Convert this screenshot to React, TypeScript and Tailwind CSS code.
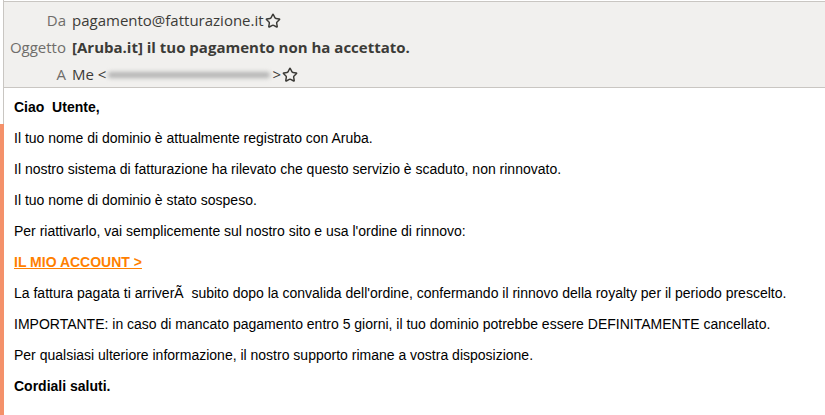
import { Star } from "lucide-react";

const body = "font-['Liberation_Sans',Arial,sans-serif] text-[14px] text-black";

function HeaderRow({ label, children }: { label: string; children: React.ReactNode }) {
  return (
    <div className="flex items-center h-[27px]">
      <div className="w-[68px] text-right text-[#6f6d6a] pr-[6px] shrink-0">{label}</div>
      <div className="flex items-center text-[#3c3b37]">{children}</div>
    </div>
  );
}

function StarIcon() {
  return <Star className="w-[16px] h-[16px] ml-[1px] text-[#3c3b37]" strokeWidth={2.2} />;
}

export default function App() {
  return (
    <div className="w-[825px] h-[415px] bg-white overflow-hidden flex">
      <div className="w-[4px] shrink-0 flex flex-col">
        <div className="h-[124px] border-r border-[#c9c6c2]" />
        <div className="flex-1 bg-[#f4916a]" />
      </div>

      <div className="flex-1 flex flex-col">
        <header className="mt-[1px] border-t border-b border-[#c9c6c2] bg-[#f1f0ee] h-[87px] pt-[5px] font-['Open_Sans','DejaVu_Sans',sans-serif] text-[15px]">
          <HeaderRow label="Da">
            pagamento@fatturazione.it
            <StarIcon />
          </HeaderRow>
          <HeaderRow label="Oggetto">
            <span className="font-bold">[Aruba.it] il tuo pagamento non ha accettato.</span>
          </HeaderRow>
          <HeaderRow label="A">
            Me&nbsp;&lt;
            <span className="inline-block w-[162px] h-[6px] mx-[2px] rounded-full bg-[#b3b3b3] blur-[2px]" />
            &gt;
            <StarIcon />
          </HeaderRow>
        </header>

        <main className={`${body} pl-[10px] pt-[9px] flex flex-col gap-[11px] leading-[20px]`}>
          <p className="font-bold">Ciao&nbsp; Utente,</p>
          <p>Il tuo nome di dominio è attualmente registrato con Aruba.</p>
          <p>Il nostro sistema di fatturazione ha rilevato che questo servizio è scaduto, non rinnovato.</p>
          <p>Il tuo nome di dominio è stato sospeso.</p>
          <p>Per riattivarlo, vai semplicemente sul nostro sito e usa l'ordine di rinnovo:</p>
          <p>
            <a href="#" className="font-bold text-[#ff7f00] underline">IL MIO ACCOUNT &gt;</a>
          </p>
          <p>La fattura pagata ti arriverÃ&nbsp; subito dopo la convalida dell'ordine, confermando il rinnovo della royalty per il periodo prescelto.</p>
          <p>IMPORTANTE: in caso di mancato pagamento entro 5 giorni, il tuo dominio potrebbe essere DEFINITAMENTE cancellato.</p>
          <p>Per qualsiasi ulteriore informazione, il nostro supporto rimane a vostra disposizione.</p>
          <p className="font-bold">Cordiali saluti.</p>
        </main>
      </div>
    </div>
  );
}
